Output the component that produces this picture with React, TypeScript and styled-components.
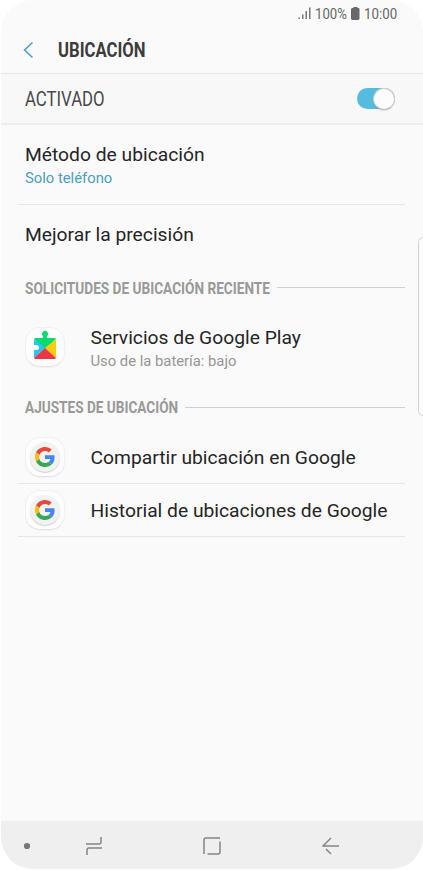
import React from "react";
import styled, { createGlobalStyle } from "styled-components";

const GlobalStyle = createGlobalStyle`
  * { box-sizing: border-box; }
  body { margin: 0; background: #fff; font-family: Roboto, "Liberation Sans", sans-serif; }
`;

const Phone = styled.main`
  position: relative;
  display: flex;
  flex-direction: column;
  width: 422px;
  height: 869px;
  margin-left: 1px;
  overflow: hidden;
  border-radius: 32px;
  background: #fafafa;
  color: #252525;
`;

const StatusBar = styled.div`
  display: flex;
  align-items: center;
  height: 27px;
  padding-left: 297px;
  color: #666;
`;

const Condensed = styled.span<{ $size: number; $width: number; $scale: number; $weight?: number }>`
  display: block;
  flex: none;
  width: ${(p) => p.$width}px;
  margin: 0;
  font-size: ${(p) => p.$size}px;
  font-weight: ${(p) => p.$weight ?? 400};
  line-height: 24px;
  white-space: nowrap;
  transform: scaleX(${(p) => p.$scale});
  transform-origin: left center;
`;

const TitleBar = styled.header`
  display: flex;
  align-items: center;
  height: 47px;
  padding: 0 0 0 22px;
  border-bottom: 1px solid #e7e7e7;
  color: #3c3c3c;
  svg { margin-right: 22.5px; }
`;

const SwitchRow = styled.section`
  display: flex;
  align-items: center;
  justify-content: space-between;
  height: 51px;
  padding: 0 28px 0 24px;
  border-bottom: 2px solid #ededed;
  background: #f8f8f8;
  color: #484848;
`;

const Toggle = styled.div`
  display: flex;
  justify-content: flex-end;
  align-items: center;
  width: 38px;
  height: 21px;
  border-radius: 11px;
  background: #55bbdf;
`;

const Knob = styled.div`
  width: 22px;
  height: 22px;
  flex: none;
  border: 1px solid #d0d0d0;
  border-bottom-color: #bbb;
  border-radius: 50%;
  background: #fcfcfc;
  box-shadow: 0 1px 1px rgba(0, 0, 0, 0.1);
`;

const Item = styled.section<{ $height: number; $line?: boolean; $top?: number; $bottom?: number }>`
  display: flex;
  align-items: center;
  height: ${(p) => p.$height}px;
  margin: 0 18px 0 17px;
  padding: ${(p) => p.$top ?? 0}px 0 ${(p) => p.$bottom ?? 0}px 7px;
  border-bottom: ${(p) => (p.$line ? "1px solid #e6e6e6" : "0")};
`;

const Copy = styled.div<{ $gap?: number; $top?: number }>`
  display: flex;
  flex-direction: column;
  margin-left: ${(p) => p.$gap ?? 0}px;
  padding-top: ${(p) => p.$top ?? 0}px;
`;

const Label = styled.span`
  font-size: 19.25px;
  line-height: 24px;
  white-space: nowrap;
`;

const Detail = styled.span<{ $accent?: boolean }>`
  font-size: 14.8px;
  line-height: 23px;
  color: ${(p) => (p.$accent ? "#4d9dbc" : "#969696")};
  white-space: nowrap;
`;

const Heading = styled.div`
  display: flex;
  align-items: center;
  height: 47px;
  padding: 0 18px 0 24px;
  color: #999;
`;

const Rule = styled.div<{ $lift: number }>`
  flex: 1;
  height: 1px;
  margin: 0 0 ${(p) => p.$lift}px 6px;
  background: #d0d0d0;
`;

const IconTile = styled.div`
  display: grid;
  place-items: center;
  width: 40px;
  height: 40px;
  flex: none;
  border: 1px solid #f0f0f0;
  border-bottom-color: #e2e2e2;
  border-radius: 15px;
  background: #fdfdfd;
  box-shadow: 0 1px 1px rgba(0, 0, 0, 0.03);
`;

const GoogleDisc = styled.div`
  display: grid;
  place-items: center;
  width: 30px;
  height: 30px;
  border-radius: 50%;
  background: #f2f2f2;
  box-shadow: 0 1px 1px #d0d0d0;
`;

const EdgeHandle = styled.div`
  position: absolute;
  top: 237px;
  right: -6px;
  width: 11px;
  height: 179px;
  border: 1px solid #d2d2d2;
  border-radius: 6px;
  background: #fcfcfc;
`;

const NavBar = styled.nav`
  display: grid;
  grid-template-columns: 52px 82px 154px 84px 50px;
  align-items: center;
  justify-items: center;
  height: 48px;
  padding-top: 1px;
  margin-top: auto;
  background: #efefef;
`;

const GoogleIcon = () => (
  <IconTile>
    <GoogleDisc>
      <svg width="20" height="20" viewBox="0 0 48 48">
        <path fill="#e5483c" d="M24 9.5c3.54 0 6.71 1.22 9.21 3.6l6.85-6.85C35.9 2.38 30.47 0 24 0 14.62 0 6.51 5.38 2.56 13.22l7.98 6.19C12.43 13.72 17.74 9.5 24 9.5z" />
        <path fill="#4285f4" d="M46.98 24.55c0-1.57-.15-3.09-.38-4.55H24v9.02h12.94c-.58 2.96-2.26 5.48-4.78 7.18l7.73 6c4.51-4.18 7.09-10.36 7.09-17.65z" />
        <path fill="#fbbc05" d="M10.53 28.59A14.5 14.5 0 0 1 9.77 24c0-1.6.27-3.14.76-4.59l-7.98-6.19A23.9 23.9 0 0 0 0 24c0 3.88.92 7.54 2.56 10.78l7.97-6.19z" />
        <path fill="#34a853" d="M24 48c6.48 0 11.93-2.13 15.89-5.81l-7.73-6c-2.15 1.45-4.92 2.3-8.16 2.3-6.26 0-11.57-4.22-13.47-9.91l-7.98 6.19C6.51 42.62 14.62 48 24 48z" />
      </svg>
    </GoogleDisc>
  </IconTile>
);

const PlayServicesIcon = () => (
  <IconTile>
    <svg width="22" height="32" viewBox="0 0 22 32">
      <path fill="#00dc70" d="M1 7h8V5.200a3 3 0 1 1 4 0V7h8l1 1-11 10L0 8z" />
      <path fill="#28c4f3" d="M0 8v6h1.800a2.600 2.600 0 1 1 0 5H0v8l11-10z" />
      <path fill="#ffcc08" d="M22 8v19L11 17z" />
      <path fill="#ec3546" d="M0 27l11-10 11 10-1 1H1z" />
    </svg>
  </IconTile>
);

const SignalIcon = () => (
  <svg width="14" height="13" viewBox="0 0 14 13" fill="#777">
    <rect x="0.5" y="10.500" width="1.500" height="1.500" />
    <rect x="4" y="7.500" width="1.500" height="4.500" />
    <rect x="7.500" y="4" width="1.500" height="8" />
    <rect x="11" y="0.500" width="1.500" height="11.500" />
  </svg>
);

const BatteryIcon = () => (
  <svg width="9" height="13" viewBox="0 0 9 13" fill="#686868">
    <path d="M2.500 0h4v1H8l.5 1v10l-1 1H1l-1-1V2l1-1h1.500z" />
  </svg>
);

export default function App() {
  return (
    <>
      <GlobalStyle />
      <Phone>
        <StatusBar>
          <SignalIcon />
          <Copy $gap={3}><Condensed $size={15.3} $width={36} $scale={0.86}>100%</Condensed></Copy>
          <BatteryIcon />
          <Copy $gap={4}><Condensed $size={15.3} $width={36} $scale={0.87}>10:00</Condensed></Copy>
        </StatusBar>
        <TitleBar>
          <svg width="12" height="18" viewBox="0 0 12 18" fill="none" stroke="#459fc3" strokeWidth="1.5">
            <path d="M9.500 1.500L1.500 9l8 7.500" />
          </svg>
          <Copy $top={2}><Condensed as="h1" $size={19.5} $width={88} $scale={0.855} $weight={700}>UBICACIÓN</Condensed></Copy>
        </TitleBar>
        <SwitchRow>
          <Copy $top={2}><Condensed $size={19.5} $width={80} $scale={0.86}>ACTIVADO</Condensed></Copy>
          <Toggle role="switch" aria-checked="true"><Knob /></Toggle>
        </SwitchRow>
        <Item $height={80} $line $top={3}>
          <Copy>
            <Label>Método de ubicación</Label>
            <Detail $accent>Solo teléfono</Detail>
          </Copy>
        </Item>
        <Item $height={60}><Label>Mejorar la precisión</Label></Item>
        <Heading>
          <Condensed $size={16.2} $width={246} $scale={0.842} $weight={700}>SOLICITUDES DE UBICACIÓN RECIENTE</Condensed>
          <Rule $lift={3} />
        </Heading>
        <Item $height={72} $bottom={2}>
          <PlayServicesIcon />
          <Copy $gap={25.5} $top={4}>
            <Label>Servicios de Google Play</Label>
            <Detail>Uso de la batería: bajo</Detail>
          </Copy>
        </Item>
        <Heading>
          <Condensed $size={16.2} $width={154} $scale={0.84} $weight={700}>AJUSTES DE UBICACIÓN</Condensed>
          <Rule $lift={1} />
        </Heading>
        <Item $height={53} $line $bottom={1}><GoogleIcon /><Copy $gap={25.5} $top={2}><Label>Compartir ubicación en Google</Label></Copy></Item>
        <Item $height={53} $line $bottom={1}><GoogleIcon /><Copy $gap={25.5} $top={2}><Label>Historial de ubicaciones de Google</Label></Copy></Item>
        <EdgeHandle />
        <NavBar>
          <svg width="8" height="8" viewBox="0 0 8 8"><circle cx="4" cy="4" r="3.100" fill="#777" /></svg>
          <svg width="18" height="20" viewBox="0 0 18 20" fill="none" stroke="#858585" strokeWidth="1.500">
            <path d="M1 8h13q2 0 2-2V1M17 12H4q-2 0-2 2v5" />
          </svg>
          <svg width="18" height="18" viewBox="0 0 18 18" fill="none" stroke="#858585" strokeWidth="1.500">
            <path d="M1 17V3q0-2 2-2h14M17 4.500V15q0 2-2 2H4.500" />
          </svg>
          <svg width="18" height="18" viewBox="0 0 18 18" fill="none" stroke="#858585" strokeWidth="1.500">
            <path d="M9 1L1 9h16M4 12l5 5" />
          </svg>
        </NavBar>
      </Phone>
    </>
  );
}
